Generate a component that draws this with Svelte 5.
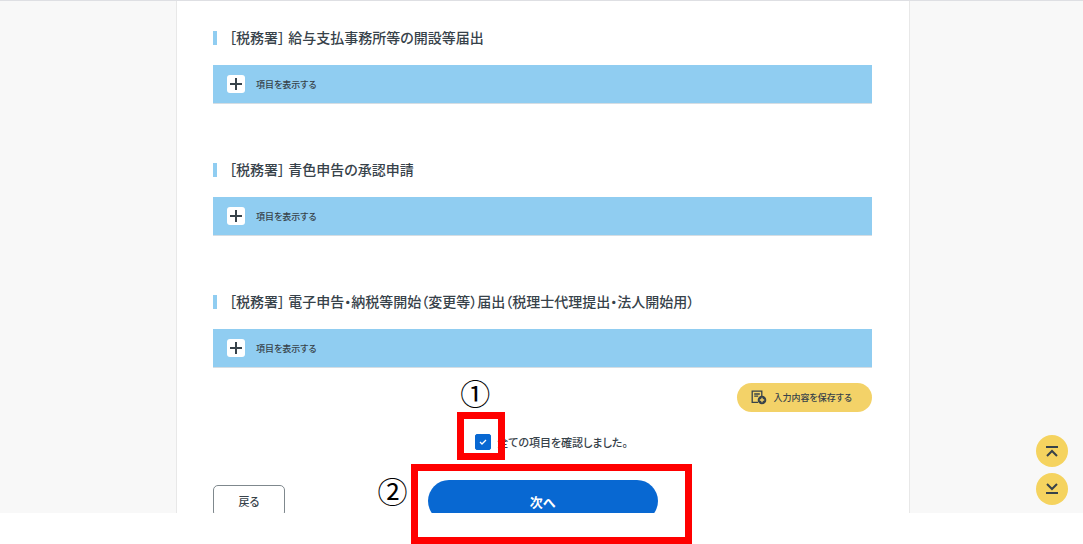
<script lang="ts">
  const sections = [
    { id: 'payroll', title: '［税務署］ 給与支払事務所等の開設等届出' },
    { id: 'blue', title: '［税務署］ 青色申告の承認申請' },
    { id: 'etax', title: '［税務署］ 電子申告・納税等開始（変更等）届出（税理士代理提出・法人開始用）' },
  ];

  let confirmed = $state(true);
</script>

<div class="page">
  <div class="screen">
    <main class="sheet">
      {#each sections as section (section.id)}
        <section>
          <h2>{section.title}</h2>
          <button class="accordion" type="button">
            <span class="plus">
              <svg viewBox="0 0 18 18" width="18" height="18" aria-hidden="true">
                <path d="M9 3v12M3 9h12" />
              </svg>
            </span>
            項目を表示する
          </button>
        </section>
      {/each}

      <div class="save-row">
        <button class="save" type="button">
          <svg viewBox="0 0 16 15" width="16" height="15" aria-hidden="true">
            <path class="line" d="M7 12.3H1.2V1.2h9.6v5M3.2 4h5.6M3.2 6.2h4" />
            <circle cx="11" cy="10" r="4.3" />
            <path class="cross" d="M11 7.8v4.4M8.8 10h4.4" />
          </svg>
          入力内容を保存する
        </button>
      </div>

      <div class="confirm-row">
        <label class="confirm">
          <span class="box">
            <input type="checkbox" bind:checked={confirmed} />
            {#if confirmed}
              <svg viewBox="0 0 16 16" width="16" height="16" aria-hidden="true">
                <path d="M5 8l2 2 4-4" />
              </svg>
            {/if}
            <span class="frame frame-check"></span>
            <span class="num num-check">①</span>
          </span>
          全ての項目を確認しました。
        </label>
      </div>

      <div class="actions">
        <div class="crop back-crop">
          <button class="back" type="button">戻る</button>
        </div>
        <div class="next-slot">
          <div class="crop next-crop">
            <button class="next" type="button">次へ</button>
          </div>
          <span class="frame frame-next"></span>
          <span class="num num-next">②</span>
        </div>
      </div>
    </main>

    <nav class="jump">
      <button type="button" aria-label="ページの先頭へ">
        <svg viewBox="0 0 32 32" width="32" height="32" aria-hidden="true">
          <path d="M10 12h12M11 21l5-5 5 5" />
        </svg>
      </button>
      <button type="button" aria-label="ページの末尾へ">
        <svg viewBox="0 0 32 32" width="32" height="32" aria-hidden="true">
          <path d="M11 11l5 5 5-5M10 20h12" />
        </svg>
      </button>
    </nav>
  </div>
</div>

<style>
  :global(body) {
    background: #fff;
  }

  .page {
    padding-bottom: 31px;
  }

  .screen {
    position: relative;
    display: grid;
    grid-template-columns: 176fr 734fr 173fr;
    background: #f8f8f8;
    border-top: 1px solid #dedfe3;
    color: #37424a;
    font-family: 'Noto Sans CJK JP', sans-serif;
    font-weight: 500;
    font-feature-settings: 'palt';
  }

  button {
    font: inherit;
    font-feature-settings: inherit;
    color: inherit;
    cursor: pointer;
  }

  .sheet {
    grid-column: 2;
    padding: 30px 37px 0 36px;
    background: #fff;
    border: solid #e8e8e8;
    border-width: 0 1px;
  }

  section + section {
    margin-top: 59px;
  }

  h2 {
    margin: 0 0 20px;
    padding: 0 0 2px 12px;
    border-left: 4px solid #90cdf1;
    font-size: 14px;
    font-weight: 500;
    line-height: 12px;
  }

  .accordion {
    display: flex;
    align-items: center;
    gap: 11px;
    box-sizing: border-box;
    width: 100%;
    height: 39px;
    padding: 0 14px;
    background: #90cdf1;
    border: 0;
    border-bottom: 1px solid #d5dde3;
    font-size: 9px;
  }

  .plus {
    display: flex;
    background: #fff;
    border-radius: 3px;
  }

  svg {
    fill: none;
    stroke: #37424a;
    stroke-width: 2;
  }

  .save-row {
    display: flex;
    justify-content: flex-end;
    margin-top: 15px;
  }

  .save {
    display: flex;
    align-items: center;
    gap: 6px;
    height: 29px;
    padding: 0 20px 0 14px;
    background: #f3d268;
    border: 0;
    border-radius: 15px;
    font-size: 9px;
  }

  .save .line {
    stroke-width: 1.3;
  }

  .save circle {
    fill: #37424a;
    stroke: none;
  }

  .save .cross {
    stroke: #f3d268;
    stroke-width: 1.3;
  }

  .confirm-row {
    display: flex;
    justify-content: center;
    margin-top: 22px;
    padding-left: 18px;
  }

  .confirm {
    display: flex;
    align-items: center;
    gap: 6px;
    height: 16px;
    font-size: 11px;
  }

  .box {
    position: relative;
    display: flex;
  }

  .box input {
    appearance: none;
    width: 16px;
    height: 16px;
    margin: 0;
    border: 1px solid #0868d2;
    border-radius: 2px;
  }

  .box input:checked {
    background: #0868d2;
  }

  .box svg {
    position: absolute;
    inset: 0;
    stroke: #fff;
    stroke-width: 1.3;
    pointer-events: none;
  }

  .frame {
    position: absolute;
    box-sizing: border-box;
    border: 7px solid #f00;
    pointer-events: none;
  }

  .frame-check {
    top: -22px;
    left: -18px;
    width: 48px;
    height: 48px;
  }

  .frame-next {
    top: -16px;
    left: -17px;
    right: -34px;
    height: 80px;
  }

  .num {
    position: absolute;
    color: #000;
    font-size: 30px;
    font-weight: 400;
    line-height: 30px;
  }

  .num-check {
    top: -57px;
    left: -15px;
  }

  .num-next {
    top: -5px;
    left: -50px;
  }

  .actions {
    display: grid;
    grid-template-columns: 1fr auto 1fr;
    align-items: end;
    margin-top: 30px;
  }

  .crop {
    overflow: hidden;
  }

  .back-crop {
    height: 28px;
  }

  .back {
    width: 72px;
    height: 32px;
    background: #fff;
    border: 1px solid #7f888d;
    border-radius: 5px;
    font-size: 11px;
  }

  .next-slot {
    position: relative;
  }

  .next-crop {
    height: 33px;
  }

  .next {
    width: 230px;
    height: 42px;
    background: #0868d2;
    border: 0;
    border-radius: 21px;
    color: #fff;
    font-size: 13px;
    font-weight: 700;
  }

  .jump {
    position: absolute;
    right: 15px;
    bottom: 8px;
    display: grid;
    gap: 6px;
  }

  .jump button {
    display: flex;
    padding: 0;
    background: #f5d35f;
    border: 0;
    border-radius: 50%;
  }
</style>
